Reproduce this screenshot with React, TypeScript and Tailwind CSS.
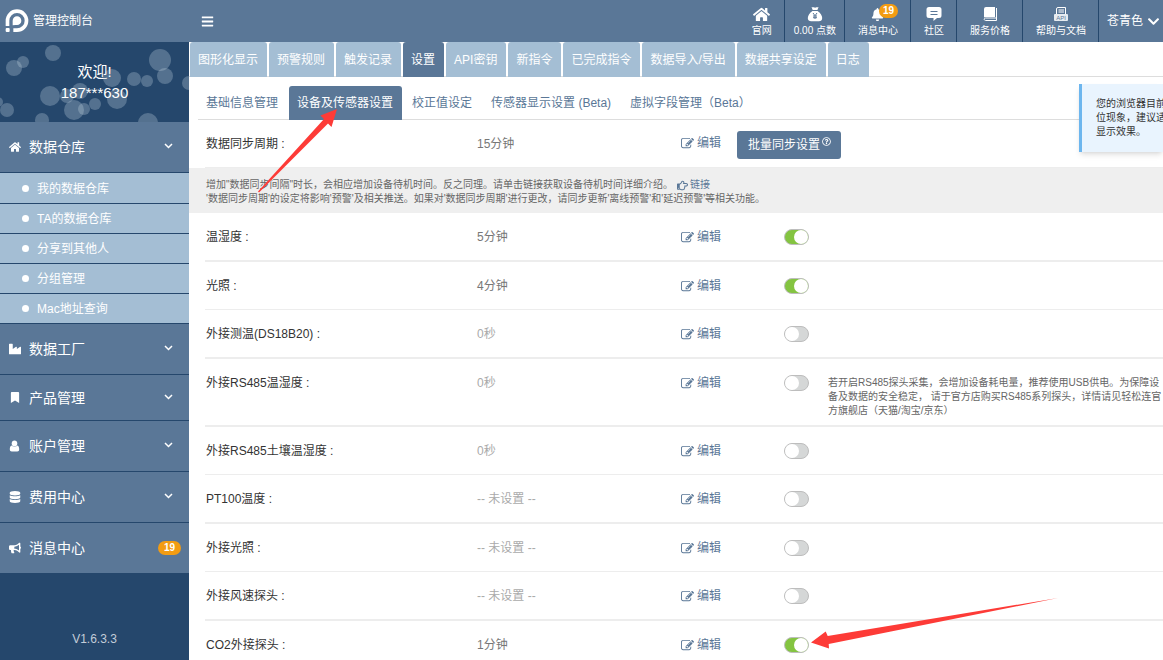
// Console page: device & sensor settings
// Header, sidebar navigation, tabs and the list of sensor intervals

import React, { useState } from 'react';
import clsx from 'clsx';
import {
  FaBars,
  FaBell,
  FaBookmark,
  FaBullhorn,
  FaChevronDown,
  FaDatabase,
  FaHome,
  FaIndustry,
  FaRegHandPointRight,
  FaRegQuestionCircle,
} from 'react-icons/fa';

interface Sensor {
  id: string;
  name: string;
  value: string;
  enabled: boolean;
  note?: string;
}

const SENSORS: Sensor[] = [
  { id: 'th', name: '温湿度', value: '5分钟', enabled: true },
  { id: 'light', name: '光照', value: '4分钟', enabled: true },
  { id: 'ds18b20', name: '外接测温(DS18B20)', value: '0秒', enabled: false },
  {
    id: 'rs485-th',
    name: '外接RS485温湿度',
    value: '0秒',
    enabled: false,
    note: '若开启RS485探头采集，会增加设备耗电量，推荐使用USB供电。为保障设备及数据的安全稳定， 请于官方店购买RS485系列探头，详情请见轻松连官方旗舰店（天猫/淘宝/京东）',
  },
  { id: 'rs485-soil', name: '外接RS485土壤温湿度', value: '0秒', enabled: false },
  { id: 'pt100', name: 'PT100温度', value: '-- 未设置 --', enabled: false },
  { id: 'ext-light', name: '外接光照', value: '-- 未设置 --', enabled: false },
  { id: 'wind', name: '外接风速探头', value: '-- 未设置 --', enabled: false },
  { id: 'co2', name: 'CO2外接探头', value: '1分钟', enabled: true },
];

// Rows that are followed by the thin divider
const THIN_ROWS = ['light', 'rs485-soil', 'ext-light'];

const TABS = ['图形化显示', '预警规则', '触发记录', '设置', 'API密钥', '新指令', '已完成指令', '数据导入/导出', '数据共享设定', '日志'];
const SUB_TABS = ['基础信息管理', '设备及传感器设置', '校正值设定', '传感器显示设置 (Beta)', '虚拟字段管理（Beta）'];
const WAREHOUSE_LINKS = ['我的数据仓库', 'TA的数据仓库', '分享到其他人', '分组管理', 'Mac地址查询'];

// cx, cy, r of the circles behind the welcome text
const BUBBLES = [
  [14, 26, 8], [23, 20, 6], [53, 11, 8], [160, 18, 11], [165, 34, 8], [134, 37, 7], [147, 39, 6],
  [112, 36, 9], [189, 41, 7], [50, 54, 10], [80, 49, 8], [67, 54, 7], [74, 68, 10], [84, 67, 6],
  [95, 62, 6], [117, 57, 10], [7, 68, 7], [42, 78, 7], [148, 81, 10], [-2, 60, 5],
];

const Logo: React.FC = () => (
  <svg className="h-6 w-6" viewBox="0 0 72 72" fill="none" aria-hidden="true">
    <path d="M7.500 51V35A28.500 28.500 0 1 1 36 63.500H25" stroke="#fff" strokeWidth="11" />
    <path d="M23 49V35a13 13 0 1 1 13 13h-4z" fill="#fff" />
    <rect x="2" y="57" width="12" height="12" rx="3" fill="#fff" />
  </svg>
);

const MoneyBagIcon: React.FC = () => (
  <svg className="h-4 w-4" viewBox="0 0 16 16" fill="#fff" aria-hidden="true">
    <path d="M4.500 1c1 .7 1.600.2 2.300.2.700 0 .8.500 1.300.500s.7-.5 1.300-.5c.8 0 1.200.5 2.200-.2L10.400 4H5.700z" />
    <path d="M5.400 5h5.200c2.700 1.800 4.600 4.600 4.600 7 0 2.200-1.400 3.200-3.400 3.200H4.200C2.200 15.200.8 14.200.8 12c0-2.400 1.900-5.200 4.600-7z" />
    <path d="M6 7l2 2.700L10 7M8 9.700V13M6 10h4M6 11.700h4" stroke="#5a7797" fill="none" />
  </svg>
);

const CommentIcon: React.FC = () => (
  <svg className="h-4 w-4" viewBox="0 0 16 16" fill="#fff" aria-hidden="true">
    <path d="M3 1h10a2.500 2.500 0 0 1 2.500 2.500v6A2.500 2.500 0 0 1 13 12h-2l-3.500 3V12H3A2.500 2.500 0 0 1 .5 9.500v-6A2.500 2.500 0 0 1 3 1z" />
    <path d="M4.500 5.500h7M4.500 8.500h7" stroke="#5a7797" />
  </svg>
);

const BookIcon: React.FC = () => (
  <svg className="h-4 w-4" viewBox="0 0 16 16" fill="none" aria-hidden="true">
    <path d="M4 1h9v10H3.500c-.6 0-1 .2-1.500.6V3a2 2 0 0 1 2-2z" fill="#fff" />
    <path d="M14.500 2v12.500H3.700c-2 0-2-2.500 0-2.500H14" stroke="#fff" />
  </svg>
);

const ApiIcon: React.FC = () => (
  <svg className="h-4 w-4" viewBox="0 0 16 16" fill="none" aria-hidden="true">
    <path d="M3.500 8V3a1.500 1.500 0 0 1 1.500-1.500h7.500V8" stroke="#fff" />
    <path d="M5.500 4h5.500M5.500 6h5.500" stroke="#fff" />
    <rect x="1" y="8" width="14" height="7" rx="1" fill="#e6ebf0" />
    <text x="8" y="14" textAnchor="middle" fontSize="6" fill="#5a7797">API</text>
  </svg>
);

const AngleDownIcon: React.FC = () => (
  <svg className="mb-[2px] ml-auto h-[6px] w-[9px]" viewBox="0 0 9 6" fill="none" stroke="#fff" strokeWidth="1.500" aria-hidden="true">
    <path d="M1 1l3.500 3.500L8 1" />
  </svg>
);

const UserIcon: React.FC = () => (
  <svg className="h-3 w-[11px]" viewBox="0 0 11 12" fill="#fff" aria-hidden="true">
    <path d="M5.500.5c1.700 0 2.800 1.200 2.800 2.900S7.200 6.600 5.500 6.600 2.700 5.100 2.700 3.400 3.800.5 5.500.5z" />
    <path d="M2.700 5.600c1.600 1.600 4 1.600 5.600 0C9.700 6 10.200 7.600 10.200 9.300c0 1.400-.7 2.200-2 2.200H2.800c-1.300 0-2-.8-2-2.200C.8 7.600 1.300 6 2.700 5.600z" />
  </svg>
);

const EditIcon: React.FC = () => (
  <svg className="h-[13px] w-[13px]" viewBox="0 0 1792 1792" fill="currentColor" aria-hidden="true">
    <path d="M888 1184l116-116-152-152-116 116v56h96v96h56zm440-720q-16-16-33 1l-350 350q-17 17-1 33t33-1l350-350q17-17 1-33zm80 594v190q0 119-84.500 203.500t-203.500 84.500h-832q-119 0-203.500-84.500t-84.500-203.500v-832q0-119 84.500-203.500t203.500-84.500h832q63 0 117 25 15 7 18 23 3 17-9 29l-49 49q-14 14-32 8-23-6-45-6h-832q-66 0-113 47t-47 113v832q0 66 47 113t113 47h832q66 0 113-47t47-113v-126q0-13 9-22l64-64q15-15 35-7t20 29zm-96-738l288 288-672 672h-288v-288zm444 132l-92 92-288-288 92-92q28-28 68-28t68 28l152 152q28 28 28 68t-28 68z" />
  </svg>
);

const Badge: React.FC<{ className?: string }> = ({ className }) => (
  <span className={clsx('rounded-full bg-[#f39c12] text-center text-[10px] leading-[14px] font-bold text-white', className)}>
    19
  </span>
);

const TopLink: React.FC<{ label: string; icon: React.ReactNode; tight?: boolean }> = ({ label, icon, tight }) => (
  <a
    href="#"
    className={clsx(
      'relative flex flex-col items-center border-r border-[#25476c] pt-[6px] text-[10px] leading-[14px] whitespace-nowrap text-white',
      tight ? 'pr-2 pl-[9px]' : 'pr-3 pl-[13px]',
    )}
  >
    <span className="mb-[2px] flex h-4 items-center">{icon}</span>
    {label}
  </a>
);

const Header: React.FC = () => (
  <header className="flex h-[42px] bg-[#5a7797] text-white">
    <div className="flex w-[189px] shrink-0 items-center gap-1 pl-[5px] text-xs">
      <Logo />
      管理控制台
    </div>
    <button type="button" aria-label="菜单" className="ml-3 flex items-center">
      <FaBars className="h-[13px] w-[13px]" />
    </button>
    <nav className="ml-auto flex">
      <TopLink label="官网" icon={<FaHome className="h-[17px] w-[17px]" />} />
      <TopLink label="0.00 点数" icon={<MoneyBagIcon />} tight />
      <TopLink
        label="消息中心"
        icon={
          <>
            <FaBell className="h-[13px] w-[13px]" />
            <Badge className="absolute top-1 right-3 w-[19px]" />
          </>
        }
      />
      <TopLink label="社区" icon={<CommentIcon />} />
      <TopLink label="服务价格" icon={<BookIcon />} />
      <TopLink label="帮助与文档" icon={<ApiIcon />} />
      <button type="button" className="flex items-center gap-1 pr-[3px] pl-2 text-xs">
        苍青色
        <FaChevronDown className="h-[13px] w-[13px]" />
      </button>
    </nav>
  </header>
);

interface MenuItemProps {
  label: string;
  icon: React.ReactNode;
  height?: string;
  badge?: boolean;
}

const MenuItem: React.FC<MenuItemProps> = ({ label, icon, height = 'h-[51px]', badge }) => (
  <a
    href="#"
    className={clsx(
      'flex items-center border-b border-[#25476c] bg-[#5a7797] pl-[9px] text-sm text-white',
      height,
      badge ? 'pr-2' : 'pr-4',
    )}
  >
    <span className="flex w-5 items-center text-xs">{icon}</span>
    {label}
    {badge ? <Badge className="ml-auto w-[23px]" /> : <AngleDownIcon />}
  </a>
);

const Sidebar: React.FC = () => (
  <aside className="flex w-[189px] shrink-0 flex-col bg-[#25476c]">
    <div className="relative h-20 overflow-hidden pt-[19px] text-center text-[15px] leading-[21px] text-white">
      <svg className="absolute inset-0 h-full w-full" viewBox="0 0 189 80" aria-hidden="true">
        {BUBBLES.map(([cx, cy, r]) => (
          <circle key={`${cx}-${cy}`} cx={cx} cy={cy} r={r} fill="#c4d3e2" fillOpacity="0.3" />
        ))}
      </svg>
      <p className="relative">欢迎!</p>
      <p className="relative">187***630</p>
    </div>
    <nav>
      <MenuItem label="数据仓库" icon={<FaHome />} />
      <ul className="border-b border-[#25476c] bg-[#a4bed4] pt-px">
        {WAREHOUSE_LINKS.map((label) => (
          <li key={label} className="border-b border-[#25476c] last:border-b-0">
            <a href="#" className="flex h-[29px] items-center gap-2 pl-[22px] text-xs text-white">
              <span className="h-[7px] w-[7px] rounded-full bg-white" />
              {label}
            </a>
          </li>
        ))}
      </ul>
      <MenuItem label="数据工厂" icon={<FaIndustry />} />
      <MenuItem label="产品管理" icon={<FaBookmark className="h-[11px]" />} height="h-[46px]" />
      <MenuItem label="账户管理" icon={<UserIcon />} />
      <MenuItem label="费用中心" icon={<FaDatabase />} />
      <MenuItem label="消息中心" icon={<FaBullhorn />} badge />
    </nav>
    <p className="mt-[57px] text-center text-xs text-[#c3cdd8]">V1.6.3.3</p>
  </aside>
);

const EditButton: React.FC = () => (
  <button type="button" className="flex items-center gap-[3px] text-xs leading-[17px] whitespace-nowrap text-[#5a7797]">
    <EditIcon />
    编辑
  </button>
);

interface SensorRowProps {
  sensor: Sensor;
  onToggle: (id: string) => void;
}

const SensorRow: React.FC<SensorRowProps> = ({ sensor, onToggle }) => {
  const muted = sensor.value.startsWith('0') || sensor.value.startsWith('-');

  return (
    <div
      className={clsx(
        'ml-4 grid grid-cols-[271fr_204fr_103px_44px_335px] border-[#ededed] pl-px text-xs leading-[17px]',
        THIN_ROWS.includes(sensor.id) ? 'border-b' : 'border-b-2',
      )}
    >
      <label htmlFor={sensor.id} className="pt-4 pb-[14px] text-[#333]">{sensor.name} :</label>
      <span className={clsx('pt-4 pb-[14px]', muted ? 'text-[#aaa]' : 'text-[#777]')}>{sensor.value}</span>
      <div className="pt-4"><EditButton /></div>
      <div className="pt-4">
        <input
          id={sensor.id}
          type="checkbox"
          role="switch"
          checked={sensor.enabled}
          onChange={() => onToggle(sensor.id)}
          className="relative block h-4 w-[25px] appearance-none rounded-full border border-[#bdbdbd] bg-[#d5d7d7] before:absolute before:top-0 before:left-0 before:h-[14px] before:w-[14px] before:rounded-full before:bg-white checked:bg-[#84c441] checked:before:left-[9px]"
        />
      </div>
      {sensor.note && (
        <p className="pt-[17px] pb-[7px] text-[10px] leading-[14px] text-[#666]">{sensor.note}</p>
      )}
    </div>
  );
};

const App: React.FC = () => {
  const [sensors, setSensors] = useState<Sensor[]>(SENSORS);
  const [tab, setTab] = useState('设置');
  const [subTab, setSubTab] = useState('设备及传感器设置');

  const handleToggle = (id: string) => {
    setSensors((list) => list.map((s) => (s.id === id ? { ...s, enabled: !s.enabled } : s)));
  };

  return (
    <div className="relative flex h-screen flex-col overflow-hidden bg-white font-['Liberation_Sans','Noto_Sans_CJK_SC',sans-serif]">
      <Header />
      <div className="flex min-h-0 flex-1">
        <Sidebar />
        <main className="min-w-0 flex-1 overflow-hidden">
          {/* Main tabs */}
          <div className="flex h-[35px] gap-[2px] border-b border-[#ddd] pl-px">
            {TABS.map((name) => (
              <button
                key={name}
                type="button"
                onClick={() => setTab(name)}
                className={clsx(
                  'h-[35px] rounded-t-[3px] pr-[9px] pl-2 text-xs whitespace-nowrap text-white',
                  tab === name ? 'bg-[#5a7797]' : 'bg-[#a4bed4]',
                )}
              >
                {name}
              </button>
            ))}
          </div>

          {/* Sub tabs */}
          <div className="mt-[9px] ml-[9px] flex h-[34px] gap-[2px] border-b border-[#ddd]">
            {SUB_TABS.map((name) => (
              <button
                key={name}
                type="button"
                onClick={() => setSubTab(name)}
                className={clsx(
                  'h-[34px] rounded-t-[3px] pr-[9px] pl-2 text-xs whitespace-nowrap',
                  subTab === name ? 'bg-[#5a7797] text-white' : 'text-[#5a7797]',
                )}
              >
                {name}
              </button>
            ))}
          </div>

          {/* Sync interval */}
          <div className="ml-4 grid h-12 grid-cols-[271fr_204fr_56px_426px] items-center border-b border-[#ededed] pl-px text-xs">
            <span className="text-[#333]">数据同步周期 :</span>
            <span className="text-[#777]">15分钟</span>
            <EditButton />
            <button type="button" className="mt-[3px] flex h-7 w-[104px] items-center gap-[2px] rounded-[3px] bg-[#5a7797] pl-[11px] whitespace-nowrap text-white">
              批量同步设置
              <FaRegQuestionCircle className="mb-2 h-[9px] w-[9px]" />
            </button>
          </div>

          <div className="bg-[#efefef] pt-[10px] pb-[7px] pl-[17px] text-[10px] leading-[14px] text-[#666]">
            <p className="flex items-center">
              增加"数据同步间隔"时长，会相应增加设备待机时间。反之同理。请单击链接获取设备待机时间详细介绍。
              <a href="#" className="ml-1 flex items-center gap-[2px] text-[#5a7797]">
                <FaRegHandPointRight className="h-[11px] w-[11px]" />
                链接
              </a>
            </p>
            <p>'数据同步周期'的设定将影响'预警'及相关推送。如果对'数据同步周期'进行更改，请同步更新'离线预警'和'延迟预警'等相关功能。</p>
          </div>

          {sensors.map((sensor) => (
            <SensorRow key={sensor.id} sensor={sensor} onToggle={handleToggle} />
          ))}
        </main>
      </div>

      {/* Browser zoom notice */}
      <div
        role="alert"
        className="absolute top-[84px] right-0 w-[84px] overflow-hidden border-l-[3px] border-[#6db6ee] bg-[#e9f4fe] py-[13px] pl-[14px] text-[10px] leading-[14px] whitespace-nowrap text-[#333] shadow-md"
      >
        您的浏览器目前
        <br />
        位现象，建议适
        <br />
        显示效果。
      </div>

      {/* Guide arrows */}
      <svg className="pointer-events-none absolute top-[109px] left-[258px] h-[84px] w-[80px]" viewBox="258 109 80 84" fill="#fd3b37" aria-hidden="true">
        <path d="M337 109L320.500 115.500 324 119 258 191.500 259 192.500 328 123.500 331.500 127z" />
      </svg>
      <svg className="pointer-events-none absolute top-[598px] left-[811px] h-[51px] w-[247px]" viewBox="811 598 247 51" fill="#fd3b37" aria-hidden="true">
        <path d="M811 642.500L825.700 631.500 827.700 636 1058 598 828.700 644 829 648.500z" />
      </svg>
    </div>
  );
};

export default App;
